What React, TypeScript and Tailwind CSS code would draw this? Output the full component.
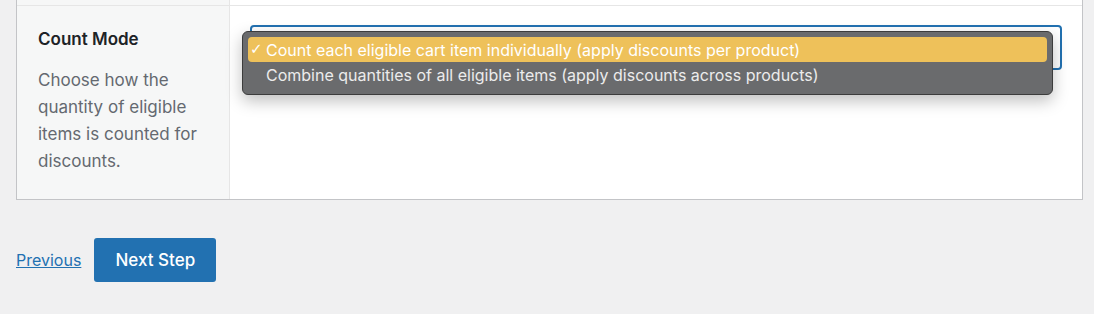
import React from 'react';

const font = { fontFamily: 'Inter, "Liberation Sans", sans-serif' };

export default function App() {
  return (
    <div className="min-h-screen bg-[#f0f0f1] text-[#1d2327]" style={font}>
      {/* settings card */}
      <div className="ml-4 mr-[11px] border-x border-b border-[#c3c4c7] bg-white">
        <div className="grid grid-cols-[213px_1fr] border-b border-[#e6e6e6]">
          <div className="h-[5px] bg-[#f6f7f7] border-r border-[#e6e6e6]" />
          <div className="h-[5px]" />
        </div>
        <div className="grid grid-cols-[213px_1fr]">
          <div className="bg-[#f6f7f7] border-r border-[#e6e6e6] pl-[21px] pr-3 pt-5 pb-6">
            <div className="text-[17px] font-semibold leading-[27px] text-[#1d2327]">Count Mode</div>
            <p className="mt-[14px] text-[17px] leading-[27px] text-[#646970]">
              Choose how the quantity of eligible items is counted for discounts.
            </p>
          </div>
          <div className="px-5 pt-[19px]">
            <div className="relative">
              <div className="h-[45px] rounded-[4px] border-2 border-[#2271b1]" />
              {/* open native menu */}
              <div className="absolute left-[-8px] top-[6px] w-[811px] rounded-[6px] border border-[#3c3c3c] bg-[#6a6b6d] px-[5px] pt-[5px] pb-[7px] shadow-[0_6px_16px_rgba(0,0,0,0.25)]">
                <div className="flex h-[25px] items-center rounded-[4px] bg-[#eec15a] text-[16px] text-white">
                  <span className="w-[18px] pl-[2px] text-[15px] leading-none" style={{ fontFamily: '"DejaVu Sans", sans-serif' }}>✓</span>
                  <span>Count each eligible cart item individually (apply discounts per product)</span>
                </div>
                <div className="flex h-[25px] items-center text-[16px] text-[#ececec]">
                  <span className="w-[18px]" />
                  <span>Combine quantities of all eligible items (apply discounts across products)</span>
                </div>
              </div>
            </div>
          </div>
        </div>
      </div>

      <div className="flex items-center gap-[13px] px-4 pt-[38px]">
        <a href="#" className="text-[16px] text-[#2271b1] underline">Previous</a>
        <button className="h-[44px] w-[122px] rounded-[3px] bg-[#2271b1] pt-[2px] text-[17px] font-medium text-white">
          Next Step
        </button>
      </div>
    </div>
  );
}
